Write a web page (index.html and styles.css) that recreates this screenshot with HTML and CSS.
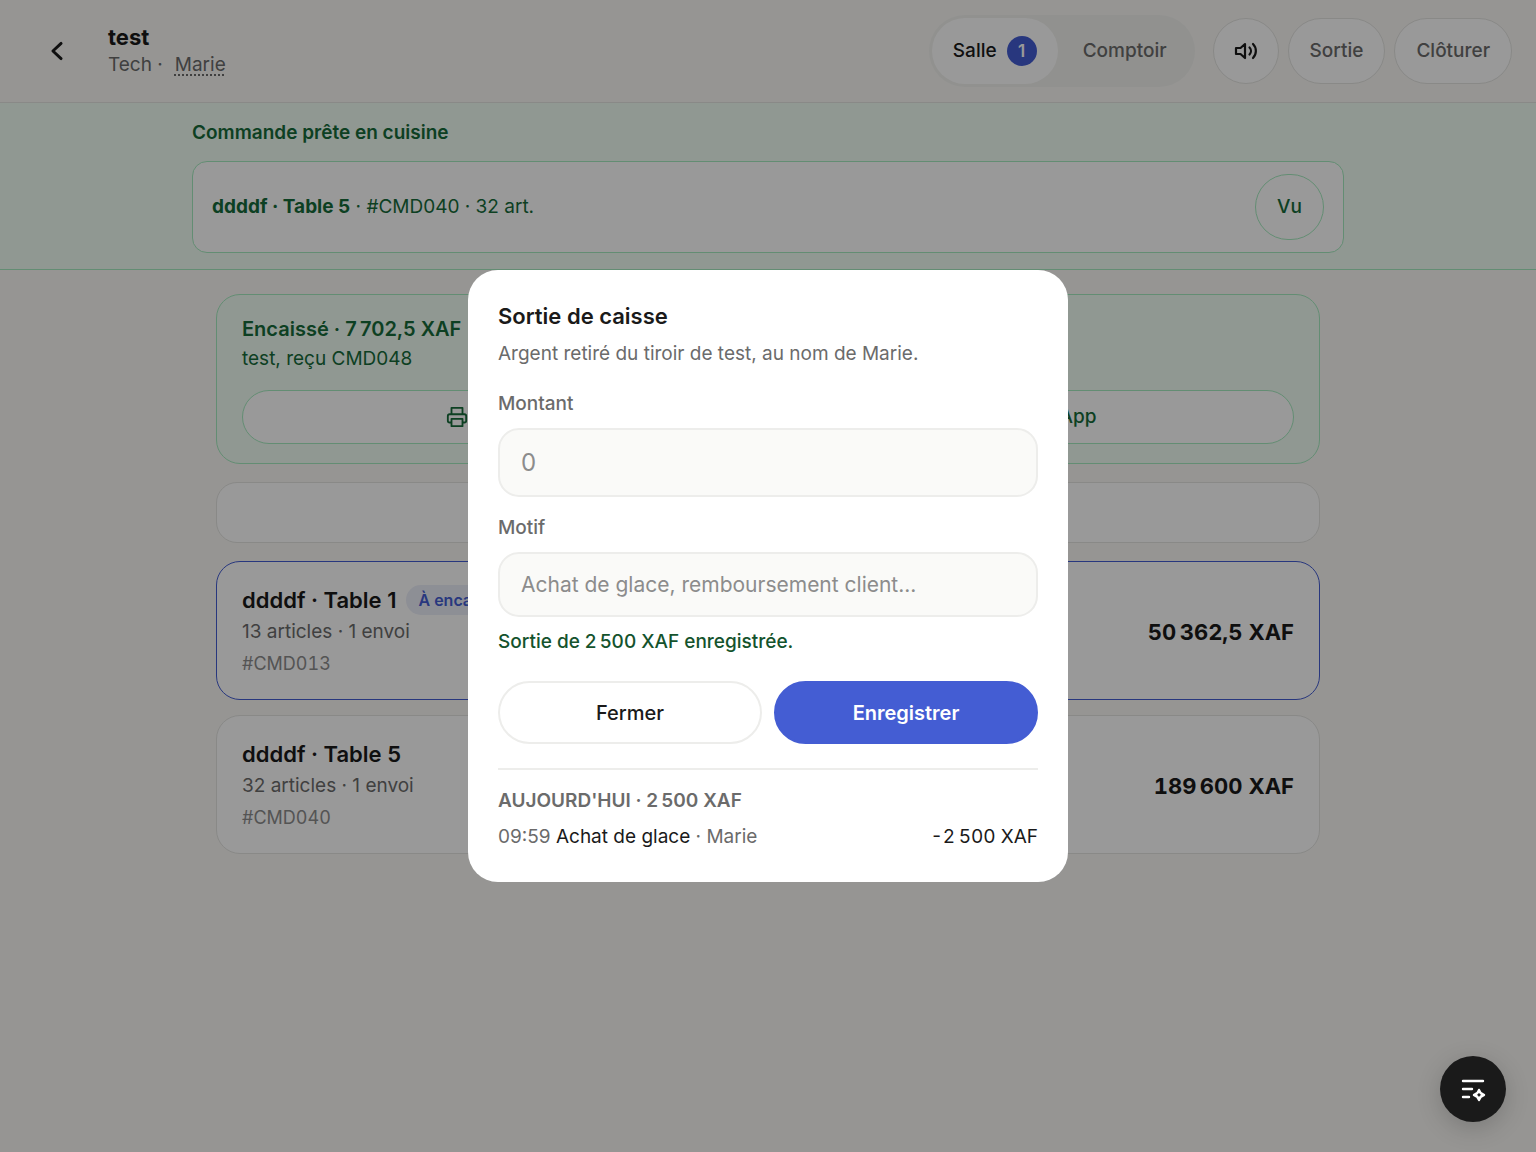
FILE: index.html
```html
<!DOCTYPE html>
<html lang="fr">
<head>
<meta charset="utf-8">
<meta name="viewport" content="width=device-width, initial-scale=1">
<title>Caisse</title>
<link rel="stylesheet" href="styles.css">
</head>
<body>
<header class="topbar">
  <button class="back" type="button" aria-label="Retour">
    <svg width="28" height="28" viewBox="0 0 24 24" fill="none" stroke="currentColor" stroke-width="2.5" stroke-linecap="round" stroke-linejoin="round"><path d="M15.500 18.500l-7-6.500 7-6.500"/></svg>
  </button>
  <div class="identity">
    <h1 class="identity-name">test</h1>
    <p class="identity-role"><span>Tech ·</span><a class="identity-user" href="#">Marie</a></p>
  </div>
  <nav class="segmented">
    <button class="segment segment-active" type="button">Salle <span class="count">1</span></button>
    <button class="segment" type="button">Comptoir</button>
  </nav>
  <div class="actions">
    <button class="pill pill-icon" type="button" aria-label="Son">
      <svg width="24" height="24" viewBox="0 0 24 24" fill="none" stroke="currentColor" stroke-width="2.2" stroke-linecap="round" stroke-linejoin="round"><path d="M11 5 6.500 9H2v6h4.500l4.500 4z"/><path d="M15.500 8.500a5 5 0 0 1 0 7"/><path d="M19 5a10 10 0 0 1 0 14"/></svg>
    </button>
    <button class="pill" type="button">Sortie</button>
    <button class="pill" type="button">Clôturer</button>
  </div>
</header>

<section class="ready">
  <div class="ready-inner">
    <h2 class="ready-title">Commande prête en cuisine</h2>
    <div class="ready-row">
      <p class="ready-text"><strong>ddddf · Table 5</strong> · #CMD040 · 32 art.</p>
      <button class="pill pill-green" type="button">Vu</button>
    </div>
  </div>
</section>

<main class="content">
  <section class="paid">
    <h2 class="paid-title">Encaissé · 7&#8239;702,5 XAF</h2>
    <p class="paid-text">test, reçu CMD048</p>
    <div class="paid-actions">
      <button class="share" type="button">
        <svg width="22" height="22" viewBox="0 0 24 24" fill="none" stroke="currentColor" stroke-width="2" stroke-linejoin="round"><path d="M6 9V2h12v7"/><path d="M6 18H4a2 2 0 0 1-2-2v-5a2 2 0 0 1 2-2h16a2 2 0 0 1 2 2v5a2 2 0 0 1-2 2h-2"/><path d="M6 14h12v8H6z"/></svg>
        Imprimer
      </button>
      <button class="share" type="button">
        <svg width="22" height="22" viewBox="0 0 24 24" fill="none" stroke="currentColor" stroke-width="2" stroke-linejoin="round"><path d="M3 21l2-5a9 9 0 1 1 3 3z"/></svg>
        WhatsApp
      </button>
    </div>
  </section>
  <button class="blank" type="button" aria-label="Nouvelle commande"></button>
  <ul class="orders">
    <li class="order order-due">
      <div>
        <h3 class="order-title">ddddf · Table 1 <span class="tag">À encaisser</span></h3>
        <p class="order-meta">13 articles · 1 envoi</p>
        <p class="order-ref">#CMD013</p>
      </div>
      <strong class="order-total">50&#8239;362,5 XAF</strong>
    </li>
    <li class="order">
      <div>
        <h3 class="order-title">ddddf · Table 5</h3>
        <p class="order-meta">32 articles · 1 envoi</p>
        <p class="order-ref">#CMD040</p>
      </div>
      <strong class="order-total">189&#8239;600 XAF</strong>
    </li>
  </ul>
</main>

<div class="overlay">
  <form class="modal" role="dialog" aria-modal="true" aria-labelledby="modal-title">
    <h2 class="modal-title" id="modal-title">Sortie de caisse</h2>
    <p class="modal-lead">Argent retiré du tiroir de test, au nom de Marie.</p>
    <label class="label" for="amount">Montant</label>
    <input class="input input-large" id="amount" type="text" inputmode="decimal" placeholder="0">
    <label class="label" for="reason">Motif</label>
    <input class="input" id="reason" type="text" placeholder="Achat de glace, remboursement client...">
    <p class="success" role="status">Sortie de 2&#8239;500 XAF enregistrée.</p>
    <div class="modal-actions">
      <button class="button" type="button">Fermer</button>
      <button class="button button-primary" type="button">Enregistrer</button>
    </div>
    <section class="history">
      <h3 class="history-title">AUJOURD'HUI · 2&#8239;500 XAF</h3>
      <p class="history-row"><span>09:59 <b>Achat de glace</b> · Marie</span><b class="history-sum">-2&#8239;500 XAF</b></p>
    </section>
  </form>
</div>

<button class="fab" type="button" aria-label="Assistant">
  <svg width="30" height="30" viewBox="0 0 30 30" fill="none" stroke="currentColor" stroke-width="2.4" stroke-linecap="round" stroke-linejoin="round"><path d="M5 7h20M5 15h9M5 23h6"/><path d="M21 16q1 4 5 5-4 1-5 5-1-4-5-5 4-1 5-5z"/></svg>
</button>
</body>
</html>
```
FILE: styles.css
```css
:root {
  --ink: #1a1a1a;
  --muted: #6b6b6b;
  --line: #ededeb;
  --line-page: #e4e4e1;
  --paper: #fafaf8;
  --blue: #445dd3;
  --green: #166b3a;
  --green-dark: #14532d;
  --green-line: #a6ecc0;
  --green-soft: #f0fdf4;
}

* { box-sizing: border-box; }

body {
  margin: 0;
  min-height: 100vh;
  background: #faf9f6;
  color: var(--ink);
  font-family: Inter, "Liberation Sans", sans-serif;
  font-size: 19px;
  line-height: 28px;
}

h1, h2, h3, p, ul { margin: 0; padding: 0; }
button, input { font: inherit; color: inherit; }
button { padding: 0; cursor: pointer; }

.topbar {
  display: flex;
  align-items: center;
  padding: 15px 24px;
  border-bottom: 1px solid var(--line-page);
}
.back {
  display: grid;
  place-items: center;
  width: 66px;
  height: 66px;
  margin-right: 18px;
  border: 0;
  background: none;
}
.identity { flex: 1; }
.identity-name { font-size: 22px; line-height: 28px; font-weight: 700; }
.identity-role { display: flex; gap: 12px; color: var(--muted); }
.identity-user {
  color: inherit;
  text-decoration: underline dotted 2px;
  text-underline-offset: 3px;
}
.segmented {
  display: flex;
  margin-right: 18px;
  padding: 3px;
  border-radius: 36px;
  background: #f2f2ef;
}
.segment {
  display: flex;
  align-items: center;
  gap: 10px;
  height: 66px;
  padding: 0 25px;
  border: 0;
  border-radius: 33px;
  background: none;
  color: var(--muted);
  font-weight: 500;
}
.segment-active { padding: 0 21px; background: #fff; color: var(--ink); }
.count {
  display: grid;
  place-items: center;
  width: 30px;
  height: 30px;
  border-radius: 50%;
  background: var(--blue);
  color: #fff;
  font-size: 17px;
  font-weight: 600;
}
.actions { display: flex; gap: 9px; }
.pill {
  display: grid;
  place-items: center;
  height: 66px;
  padding: 0 21px;
  border: 1px solid var(--line-page);
  border-radius: 33px;
  background: #fff;
  color: var(--muted);
  font-weight: 500;
}
.pill-icon { width: 66px; padding: 0; color: var(--ink); }
.pill-green { border-color: var(--green-line); color: var(--green); }

.ready {
  padding: 16px 24px;
  border-bottom: 1px solid var(--green-line);
  background: var(--green-soft);
  color: var(--green);
}
.ready-inner { max-width: 1152px; margin: 0 auto; }
.ready-title { margin-bottom: 14px; font-size: 19px; font-weight: 600; }
.ready-row {
  display: flex;
  align-items: center;
  justify-content: space-between;
  padding: 12px 19px;
  border: 1px solid var(--green-line);
  border-radius: 15px;
  background: #fff;
}

.content {
  display: flex;
  flex-direction: column;
  gap: 18px;
  max-width: 1152px;
  margin: 0 auto;
  padding: 24px;
}
.paid {
  padding: 19px 25px;
  border: 1px solid var(--green-line);
  border-radius: 24px;
  background: var(--green-soft);
  color: var(--green);
}
.paid-title { font-size: 20px; line-height: 30px; font-weight: 600; }
.paid-text { line-height: 30px; }
.paid-actions {
  display: grid;
  grid-template-columns: 1fr 1fr;
  gap: 12px;
  margin-top: 16px;
}
.share {
  display: flex;
  align-items: center;
  justify-content: center;
  gap: 8px;
  height: 54px;
  border: 1px solid var(--green-line);
  border-radius: 27px;
  background: #fff;
  font-weight: 500;
}
.blank {
  height: 61px;
  border: 1px solid var(--line-page);
  border-radius: 21px;
  background: #fff;
}
.orders { display: flex; flex-direction: column; gap: 15px; list-style: none; }
.order {
  display: flex;
  align-items: center;
  justify-content: space-between;
  padding: 22px 25px 19px;
  border: 1px solid var(--line-page);
  border-radius: 24px;
  background: #fff;
}
.order-due { border-color: var(--blue); }
.order-title {
  display: flex;
  align-items: center;
  gap: 10px;
  font-size: 22px;
  line-height: 32px;
  font-weight: 600;
}
.order-meta { line-height: 32px; color: var(--muted); }
.order-ref {
  font-size: 18px;
  line-height: 32px;
  color: #8c8c8c;
  font-variant-numeric: tabular-nums;
}
.order-total { font-size: 22px; font-weight: 700; font-variant-numeric: tabular-nums; }
.tag {
  padding: 0 12px;
  border-radius: 15px;
  background: #eceef9;
  color: var(--blue);
  font-size: 16px;
  line-height: 30px;
  font-weight: 600;
}

.overlay {
  position: fixed;
  inset: 0;
  display: grid;
  place-items: center;
  background: rgba(0, 0, 0, 0.4);
}
.modal {
  display: flex;
  flex-direction: column;
  width: 100%;
  max-width: 600px;
  padding: 30px 30px 31px;
  border-radius: 30px;
  background: #fff;
}
.modal-title { font-size: 22px; line-height: 32px; font-weight: 600; }
.modal-lead { margin: 7px 0 21px; color: var(--muted); line-height: 30px; }
.label { margin-bottom: 10px; color: var(--muted); font-weight: 500; }
.input {
  width: 100%;
  height: 65px;
  padding: 0 21px;
  border: 2px solid var(--line);
  border-radius: 21px;
  background: var(--paper);
  font-size: 21px;
}
.input-large { height: 69px; margin-bottom: 17px; font-size: 24px; }
.input::placeholder { color: #8c8c8c; opacity: 1; }
.success { margin: 11px 0 25px; color: var(--green-dark); font-weight: 500; }
.modal-actions { display: grid; grid-template-columns: 1fr 1fr; gap: 12px; }
.button {
  height: 63px;
  border: 2px solid var(--line);
  border-radius: 32px;
  background: #fff;
  font-size: 20px;
  font-weight: 500;
}
.button-primary {
  border-color: var(--blue);
  background: var(--blue);
  color: #fff;
  font-weight: 600;
}
.history { margin-top: 24px; padding-top: 17px; border-top: 2px solid var(--line); }
.history-title { color: var(--muted); font-size: 19px; font-weight: 600; }
.history-row {
  display: flex;
  justify-content: space-between;
  margin-top: 8px;
  color: var(--muted);
}
.history-row b { color: var(--ink); font-weight: 400; }
.history-sum { font-variant-numeric: tabular-nums; }

.fab {
  position: fixed;
  right: 30px;
  bottom: 30px;
  display: grid;
  place-items: center;
  width: 66px;
  height: 66px;
  border: 0;
  border-radius: 50%;
  background: #1a1a1a;
  color: #fff;
  box-shadow: 0 6px 24px rgba(0, 0, 0, 0.18);
}
```
